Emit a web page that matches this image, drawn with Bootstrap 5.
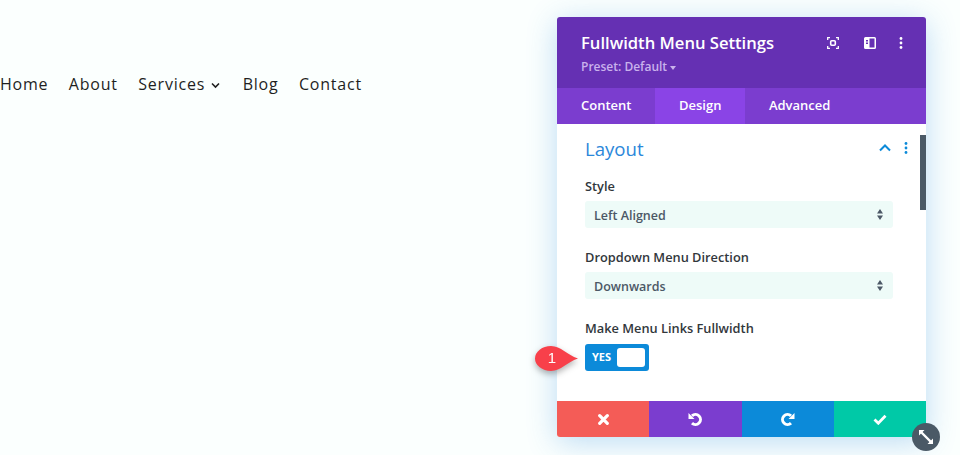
<!DOCTYPE html>
<html lang="en">
<head>
<meta charset="utf-8">
<title>Fullwidth Menu Settings</title>
<link href="https://cdn.jsdelivr.net/npm/bootstrap@5.3.0/dist/css/bootstrap.min.css" rel="stylesheet">
<style>
html,body{height:455px;overflow:hidden}
body{background:#fbfffe;font-family:"Open Sans",sans-serif;color:#32373c}
.stage{height:455px}
.site-menu{padding-top:74px;gap:20.500px;font-size:16px;letter-spacing:.78px;line-height:20px;color:#1f1f1f}
.site-menu span{white-space:nowrap}
.site-menu svg{margin:0 2px 0 6px;vertical-align:1px}
.panel{position:relative;width:369px;height:420px;margin:17px 34px 0 0;background:#fff;border-radius:3px;box-shadow:0 5px 30px rgba(43,135,218,.3)}
.panel-head{height:71px;background:#6530b3;border-radius:3px 3px 0 0;padding:14px 23px 0 24px;color:#fff}
.panel-title{font-size:16.600px;font-weight:600;line-height:24px}
.preset{font-size:12px;font-weight:600;line-height:16px;margin-top:4px;color:#c9b2ec}
.head-icons{padding-top:6px;height:24px}
.hi-a{margin-right:25px}
.hi-b{margin-right:23px}
.tabs{height:36px;background:#7b3dcf}
.tabs div{font-size:13px;font-weight:600;color:#fff;line-height:35px;padding:0 24px}
.tabs .on{background:#8a44e6;padding:0 23.500px}
.panel-body{height:277px;position:relative;padding:9px 33px 0 28px}
.section-head{height:29px;margin-top:.500px}
.section-title{font-size:18.600px;line-height:29px;color:#2b87da}
.sec-ctl{gap:13px;margin-right:-15px}
.field-label{font-size:12.800px;font-weight:600;line-height:18px;color:#32373c}
.field-first{margin-top:14px}
.field{height:27px;background:#eefbf8;border-radius:3px;margin:6px 0 20px;padding:0 10px 0 9px;font-size:12.500px;font-weight:600;line-height:27px;color:#4c5866}
.field span{margin-top:2px}
.switch-row{width:64px;height:27.500px;margin-top:7px;background:#0c8ad9;border-radius:3px;padding:4px 4px 4px 7px;color:#fff;font-size:11px;font-weight:700}
.knob{width:28px;height:19.500px;border-radius:3px;background:#fff}
.scroll-thumb{position:absolute;right:0;top:11px;width:6px;height:75px;background:#4a5966}
.panel-foot{height:36px}
.panel-foot div{flex:1}
.f-red{background:#f45c57;border-radius:0 0 0 3px}
.f-purple{background:#7b3dcf}
.f-blue{background:#0c8ad9}
.f-green{background:#00c9a7;border-radius:0 0 3px 0}
.resize{position:absolute;right:-14px;bottom:-14px;width:28px;height:28px;border-radius:50%;background:#4a5966}
.callout{position:absolute;left:-22px;top:328px;filter:drop-shadow(0 3px 3px rgba(0,0,0,.3))}
.callout-num{position:absolute;left:5px;top:0;width:24px;height:25px;color:#fff;font-family:"Liberation Sans",sans-serif;font-size:15px;line-height:25px;text-align:center}
</style>
</head>
<body>
<div class="stage d-flex justify-content-between">
  <div class="site-menu d-flex align-items-start">
    <span>Home</span>
    <span>About</span>
    <span>Services<svg width="9" height="7" viewBox="0 0 9 7"><path d="M1 1.500l3.500 3.500 3.500-3.500" fill="none" stroke="#1f1f1f" stroke-width="1.600"/></svg></span>
    <span>Blog</span>
    <span>Contact</span>
  </div>
  <div class="panel">
    <div class="panel-head d-flex justify-content-between">
      <div>
        <div class="panel-title">Fullwidth Menu Settings</div>
        <div class="preset">Preset: Default <svg width="6" height="4" viewBox="0 0 6 4" class="align-middle"><path d="M0 0h6L3 4z" fill="#c9b2ec"/></svg></div>
      </div>
      <div class="head-icons d-flex align-items-start">
        <svg class="hi-a" width="12" height="12" viewBox="0 0 12 12" fill="none" stroke="#fff" stroke-width="1.300"><path d="M.7 3V.7H3M9 .7h2.300V3M11.300 9v2.300H9M3 11.300H.7V9"/><rect x="3.700" y="3.700" width="4.600" height="4.600" rx="1" stroke-width="1.600"/></svg>
        <svg class="hi-b" width="12" height="12" viewBox="0 0 12 12"><path fill="#fff" fill-rule="evenodd" d="M1.500 0h9A1.500 1.500 0 0 1 12 1.500v9a1.500 1.500 0 0 1-1.500 1.500h-9A1.500 1.500 0 0 1 0 10.500v-9A1.500 1.500 0 0 1 1.500 0zM5.500 1.500v9h5v-9zM2 3v1.500h2V3zM2 5.500V7h2V5.500z"/></svg>
        <svg width="4" height="12" viewBox="0 0 4 12" fill="#fff"><circle cx="2" cy="1.500" r="1.400"/><circle cx="2" cy="6" r="1.400"/><circle cx="2" cy="10.500" r="1.400"/></svg>
      </div>
    </div>
    <div class="tabs d-flex">
      <div>Content</div>
      <div class="on">Design</div>
      <div>Advanced</div>
    </div>
    <div class="panel-body">
      <div class="section-head d-flex justify-content-between align-items-center">
        <div class="section-title">Layout</div>
        <div class="sec-ctl d-flex align-items-center">
          <svg width="12" height="8" viewBox="0 0 12 8"><path d="M1 6.500l5-5 5 5" fill="none" stroke="#0c8ad9" stroke-width="2"/></svg>
          <svg width="4" height="12" viewBox="0 0 4 12" fill="#0c8ad9"><circle cx="2" cy="1.500" r="1.400"/><circle cx="2" cy="6" r="1.400"/><circle cx="2" cy="10.500" r="1.400"/></svg>
        </div>
      </div>
      <div class="field-label field-first">Style</div>
      <div class="field d-flex justify-content-between align-items-center"><span>Left Aligned</span><svg width="6" height="11" viewBox="0 0 6 11" fill="#4c5866"><path d="M3 0l3 4.500H0zM3 11L0 6.500h6z"/></svg></div>
      <div class="field-label">Dropdown Menu Direction</div>
      <div class="field d-flex justify-content-between align-items-center"><span>Downwards</span><svg width="6" height="11" viewBox="0 0 6 11" fill="#4c5866"><path d="M3 0l3 4.500H0zM3 11L0 6.500h6z"/></svg></div>
      <div class="field-label">Make Menu Links Fullwidth</div>
      <div class="switch-row d-flex justify-content-between align-items-center"><span>YES</span><div class="knob"></div></div>
      <div class="scroll-thumb"></div>
    </div>
    <div class="panel-foot d-flex">
      <div class="f-red d-flex align-items-center justify-content-center"><svg width="11" height="11" viewBox="0 0 11 11"><path d="M1.700 1.700l7.600 7.600M9.300 1.700l-7.600 7.600" stroke="#fff" stroke-width="3.200" stroke-linecap="round"/></svg></div>
      <div class="f-purple d-flex align-items-center justify-content-center"><svg width="14" height="14" viewBox="0 0 14 14" fill="none"><path d="M4 3.900A5 5 0 1 1 4 11.100" stroke="#fff" stroke-width="3"/><path d="M.5 1v6h6z" fill="#fff"/></svg></div>
      <div class="f-blue d-flex align-items-center justify-content-center"><svg width="14" height="14" viewBox="0 0 14 14" fill="none"><path d="M10 3.900A5 5 0 1 0 10 11.100" stroke="#fff" stroke-width="3"/><path d="M13.500 1v6h-6z" fill="#fff"/></svg></div>
      <div class="f-green d-flex align-items-center justify-content-center"><svg width="14" height="11" viewBox="0 0 14 11"><path d="M1.500 5.500l3.800 3.700 7.200-7.400" fill="none" stroke="#fff" stroke-width="2.800"/></svg></div>
    </div>
    <div class="resize d-flex align-items-center justify-content-center"><svg width="16" height="16" viewBox="0 0 16 16" fill="none"><path d="M3 3l10 10" stroke="#fff" stroke-width="2.400"/><path d="M1 6.500V1h5.500zM15 9.500V15H9.500z" fill="#fff"/></svg></div>
    <div class="callout"><svg width="43" height="25" viewBox="0 0 43 25"><path d="M16 0C26 0 32 9 43 12.500 32 16 26 25 16 25A16 12.500 0 0 1 16 0z" fill="#f8404a"/></svg><span class="callout-num">1</span></div>
  </div>
</div>
<script src="https://cdn.jsdelivr.net/npm/bootstrap@5.3.0/dist/js/bootstrap.bundle.min.js"></script>
</body>
</html>
